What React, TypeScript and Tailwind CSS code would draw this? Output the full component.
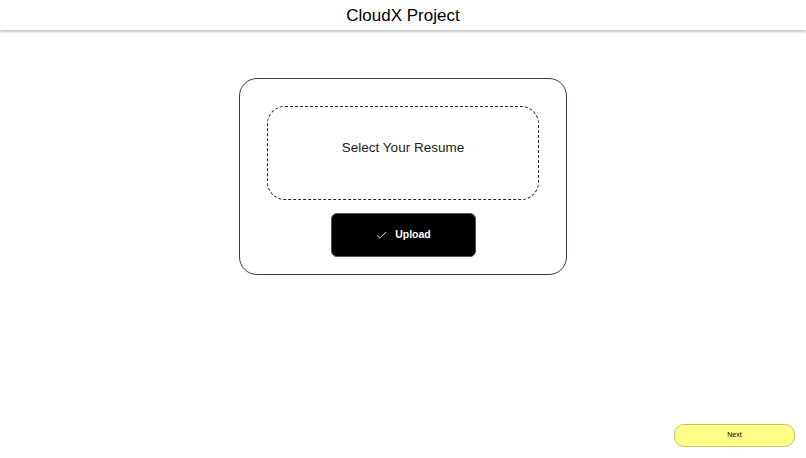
import { Check } from "lucide-react";

export default function App() {
  return (
    <div className="flex h-screen flex-col bg-white font-['Liberation_Sans',Arial,sans-serif] text-black">
      <header className="flex h-[30px] items-center justify-center bg-white shadow-[0_2px_2px_rgba(0,0,0,0.22)]">
        <h1 className="text-[17px] leading-none">CloudX Project</h1>
      </header>

      <main className="flex flex-1 flex-col items-center pt-[48px]">
        <div className="flex w-[328px] flex-col items-center rounded-[18px] border border-[#3a3a44] px-[27px] pt-[27px] pb-[17px]">
          <div className="flex h-[94px] w-full items-center justify-center rounded-[18px] border-[1.5px] border-dashed border-[#222] pb-[10px]">
            <span className="text-[13.5px] text-[#222]">Select Your Resume</span>
          </div>
          <button
            type="button"
            className="mt-[13px] flex h-[44px] w-[145px] items-center justify-center gap-[7px] rounded-[6px] border border-[#555] bg-black text-white"
          >
            <Check className="h-[13px] w-[13px]" strokeWidth={1.6} />
            <span className="text-[10.5px] font-bold">Upload</span>
          </button>
        </div>
      </main>

      <div className="flex justify-end pr-[11px] pb-[11px]">
        <button
          type="button"
          className="h-[23px] w-[121px] rounded-[10px] border border-[#c9c46a] bg-[#ffff88] text-[7px] text-black"
        >
          Next
        </button>
      </div>
    </div>
  );
}
